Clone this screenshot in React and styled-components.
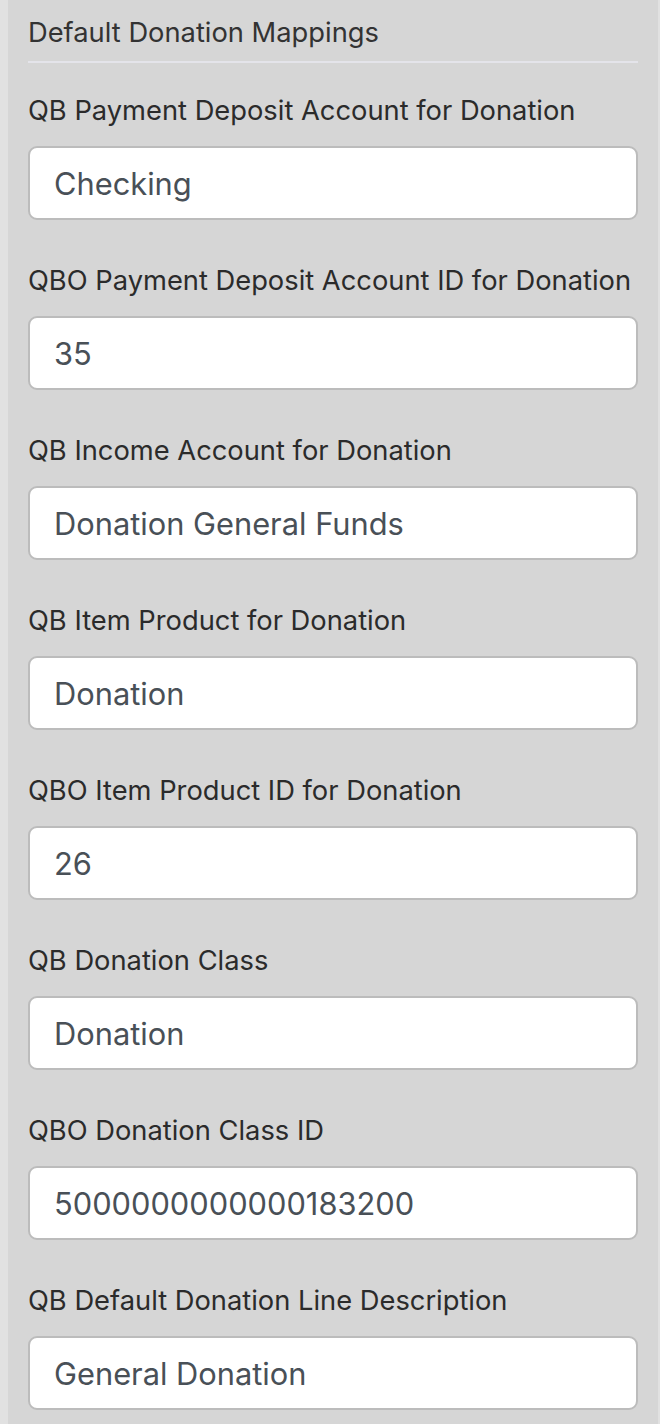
import React from 'react';
import styled, { createGlobalStyle } from 'styled-components';

const GlobalStyle = createGlobalStyle`
  html, body {
    margin: 0;
    padding: 0;
    background: #e1e1e1;
  }
  body {
    font-family: Inter, "Open Sans", "Liberation Sans", sans-serif;
  }
`;

const Panel = styled.div`
  margin-left: 8px;
  width: 650px;
  min-height: 1424px;
  box-sizing: border-box;
  padding: 16px 20px 0 20px;
  background: #d6d6d6;
`;

const Heading = styled.div`
  font-size: 27.3px;
  line-height: 34px;
  color: #333333;
  padding-bottom: 11px;
  border-bottom: 2px solid #e4e4ea;
  margin-bottom: 31px;
`;

const Field = styled.div`
  display: flex;
  flex-direction: column;
  gap: 18px;
  margin-bottom: 44px;
`;

const Label = styled.label`
  font-size: 27.3px;
  line-height: 34px;
  color: #2b2b2b;
`;

const Input = styled.input`
  box-sizing: border-box;
  width: 610px;
  height: 74px;
  padding: 0 24px;
  border: 2px solid #bcbcbc;
  border-radius: 9px;
  background: #ffffff;
  font-family: inherit;
  font-size: 30.8px;
  color: #495057;
  outline: none;
`;

const fields = [
  ['QB Payment Deposit Account for Donation', 'Checking'],
  ['QBO Payment Deposit Account ID for Donation', '35'],
  ['QB Income Account for Donation', 'Donation General Funds'],
  ['QB Item Product for Donation', 'Donation'],
  ['QBO Item Product ID for Donation', '26'],
  ['QB Donation Class', 'Donation'],
  ['QBO Donation Class ID', '5000000000000183200'],
  ['QB Default Donation Line Description', 'General Donation'],
];

export default function App() {
  return (
    <>
      <GlobalStyle />
      <Panel>
        <Heading>Default Donation Mappings</Heading>
        {fields.map(([label, value]) => (
          <Field key={label}>
            <Label>{label}</Label>
            <Input defaultValue={value} />
          </Field>
        ))}
      </Panel>
    </>
  );
}
